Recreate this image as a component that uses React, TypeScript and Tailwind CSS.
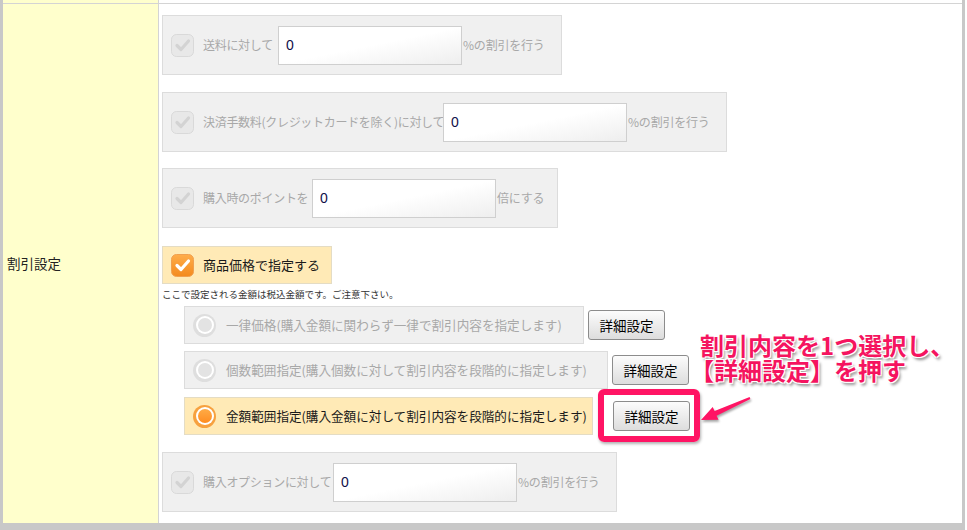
import React from "react";

const jp = "font-['Noto_Sans_CJK_JP','Noto_Sans',sans-serif]";

const percentRows = [
  { label: "送料に対して", labelW: "w-[75px]", boxW: "w-[400px]", suffix: "%の割引を行う" },
  { label: "決済手数料(クレジットカードを除く)に対して", labelW: "w-[240px]", boxW: "w-[565px]", suffix: "%の割引を行う" },
  { label: "購入時のポイントを", labelW: "w-[109px]", boxW: "w-[396px]", suffix: "倍にする" },
];

const radioRows = [
  { text: "一律価格(購入金額に関わらず一律で割引内容を指定します)", rowW: "w-[400px]", btnGap: "ml-[4px]", selected: false },
  { text: "個数範囲指定(購入個数に対して割引内容を段階的に指定します)", rowW: "w-[424px]", btnGap: "ml-[4px]", selected: false },
  { text: "金額範囲指定(購入金額に対して割引内容を段階的に指定します)", rowW: "w-[409px]", btnGap: "ml-[20px]", selected: true },
];

function DisabledCheck() {
  return (
    <svg width="23" height="23" viewBox="0 0 23 23" className="shrink-0">
      <rect x="0.5" y="0.5" width="22" height="22" rx="5" fill="#e8e8e8" stroke="#d9d9d9" />
      <path d="M6 11.5 L10 15.5 L17.5 7" fill="none" stroke="#d3d3d3" strokeWidth="3.2" strokeLinecap="round" strokeLinejoin="round" />
    </svg>
  );
}

function OrangeCheck() {
  return (
    <svg width="23" height="23" viewBox="0 0 23 23" className="shrink-0">
      <defs>
        <linearGradient id="og" x1="0" y1="0" x2="0" y2="1">
          <stop offset="0" stopColor="#ffad4a" />
          <stop offset="1" stopColor="#f38a1e" />
        </linearGradient>
      </defs>
      <rect x="0.5" y="0.5" width="22" height="22" rx="5" fill="url(#og)" stroke="#f0a050" />
      <path d="M6 11.5 L10 15.5 L17.5 7" fill="none" stroke="#ffffff" strokeWidth="3.2" strokeLinecap="round" strokeLinejoin="round" />
    </svg>
  );
}

function Radio({ on }: { on: boolean }) {
  return (
    <div className={`w-[23px] h-[23px] rounded-full flex items-center justify-center shrink-0 ${on ? "bg-[#f7a13f]" : "bg-[#dedede]"}`}>
      <div className="w-[18px] h-[18px] rounded-full bg-white flex items-center justify-center">
        <div className={`w-[14px] h-[14px] rounded-full ${on ? "bg-linear-to-b from-[#ffab45] to-[#ff8d1f]" : "bg-[#e3e3e3]"}`} />
      </div>
    </div>
  );
}

function ValueInput() {
  return (
    <input
      readOnly
      value="0"
      className="w-[184px] h-[39px] shrink-0 border border-[#cfcfcf] bg-linear-to-br from-white via-white to-[#eeeeee] pl-[7px] text-[14px] text-[#10104a] font-['Liberation_Sans',sans-serif] outline-none"
    />
  );
}

function PercentBox({ label, labelW, boxW, suffix }: { label: string; labelW: string; boxW: string; suffix: string }) {
  return (
    <div className={`${boxW} h-[60px] flex items-center pl-[8px] bg-[#f0f0f0] border border-[#dcdcdc]`}>
      <DisabledCheck />
      <span className={`${labelW} ml-[9px] shrink-0 whitespace-nowrap text-[12px] tracking-[-0.3px] text-[#a8a8a8]`}>{label}</span>
      <ValueInput />
      <span className="ml-[1px] whitespace-nowrap text-[12px] tracking-[-0.2px] text-[#a8a8a8]">{suffix}</span>
    </div>
  );
}

function DetailButton({ gap }: { gap: string }) {
  return (
    <button className={`${gap} w-[77px] h-[30px] shrink-0 border border-[#8c8c8c] rounded-[3px] bg-linear-to-b from-[#fcfcfc] to-[#dddddd] text-[13.5px] text-black`}>
      詳細設定
    </button>
  );
}

export default function App() {
  return (
    <div className={`relative w-[967px] h-[530px] overflow-hidden bg-white ${jp}`}>
      <div className="w-[965px] border-l-[3px] border-r-[3px] border-b-[8px] border-[#c8c8c8]">
        <div className="flex h-[3px]">
          <div className="w-[156px] bg-[#ffffcc] border-r border-[#d4d4d4]" />
          <div className="flex-1" />
        </div>
        <div className="flex border-t border-[#d4d4d4]">
          <div className="w-[156px] shrink-0 bg-[#ffffcc] border-r border-[#d4d4d4] flex items-center pl-[4px] text-[13.5px] text-[#222]">
            割引設定
          </div>
          <div className="flex-1 pl-[3px] pt-[11px] pb-[11px] flex flex-col items-start">
            <PercentBox {...percentRows[0]} />
            <div className="mt-[17px]">
              <PercentBox {...percentRows[1]} />
            </div>
            <div className="mt-[16px]">
              <PercentBox {...percentRows[2]} />
            </div>

            <div className="mt-[18px] w-[170px] h-[38px] flex items-center pl-[8px] bg-[#ffeab6] border border-[#e4dcc4]">
              <OrangeCheck />
              <span className="ml-[9px] whitespace-nowrap text-[13px] text-[#1a1a1a]">商品価格で指定する</span>
            </div>
            <p className="mt-[4px] h-[13px] leading-[13px] text-[9.5px] text-[#333] whitespace-nowrap">
              ここで設定される金額は税込金額です。ご注意下さい。
            </p>

            <div className="mt-[5px] ml-[22px] flex flex-col gap-[7px]">
              {radioRows.map((r, i) => (
                <div key={i} className={`flex items-center ${i === 2 ? "mt-[1px]" : ""}`}>
                  <div
                    className={`${r.rowW} h-[38px] flex items-center pl-[8px] border ${
                      r.selected ? "bg-[#ffeab6] border-[#e4dcc4]" : "bg-[#f0f0f0] border-[#dcdcdc]"
                    }`}
                  >
                    <Radio on={r.selected} />
                    <span className={`ml-[10px] whitespace-nowrap text-[12.6px] ${r.selected ? "text-[#1a1a1a]" : "text-[#a8a8a8]"}`}>
                      {r.text}
                    </span>
                  </div>
                  <DetailButton gap={r.btnGap} />
                </div>
              ))}
            </div>

            <div className="mt-[17px]">
              <PercentBox label="購入オプションに対して" labelW="w-[130px]" boxW="w-[455px]" suffix="%の割引を行う" />
            </div>
          </div>
        </div>
      </div>

      {/* annotation overlay */}
      <div className="absolute left-[598px] top-[389px] w-[102px] h-[53px] border-[6px] border-[#ff1464] rounded-[6px] shadow-[1px_2px_3px_rgba(0,0,0,0.3)]" />
      <svg className="absolute left-[690px] top-[390px] w-[70px] h-[40px] drop-shadow-[1px_2px_1px_rgba(0,0,0,0.35)]" viewBox="690 390 70 40">
        <polygon
          points="701,420 712.7,407 714.6,411.1 749.6,397.1 750.4,398.9 716.6,415.7 718.5,419.8"
          fill="#ff1464"
        />
      </svg>
      <p className="absolute left-[690px] top-[332px] indent-[10px] text-[24px] leading-[25px] font-bold text-[#f5145f] whitespace-nowrap [text-shadow:-1px_-1px_0_#fff,1px_-1px_0_#fff,-1px_1px_0_#fff,1px_1px_0_#fff,2px_3px_3px_rgba(0,0,0,0.45)]">
        割引内容を1つ選択し、
        <br />
        【詳細設定】を押す
      </p>
    </div>
  );
}
